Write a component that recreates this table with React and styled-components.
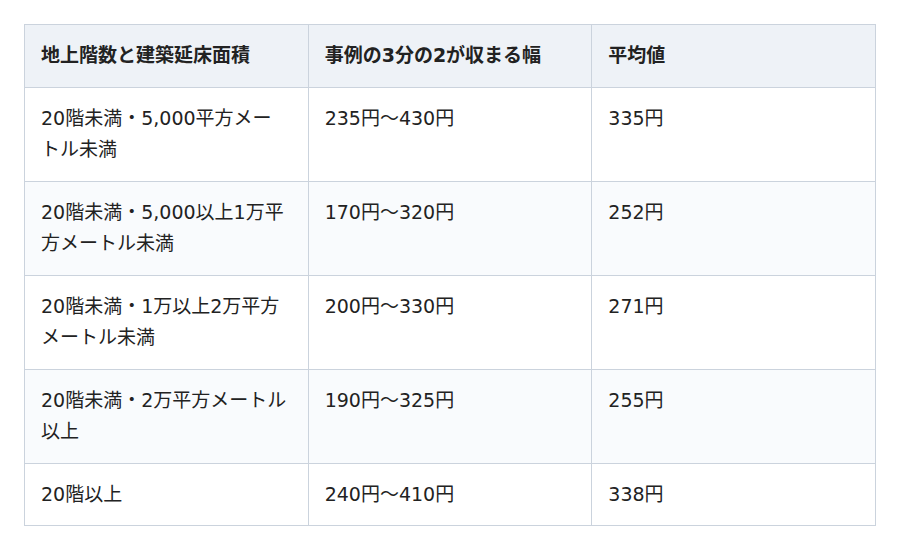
import styled, { createGlobalStyle } from "styled-components";

const GlobalStyle = createGlobalStyle`
  body {
    margin: 0;
    background: #ffffff;
    font-family: "DejaVu Sans", "Noto Sans CJK JP", sans-serif;
    color: #222;
  }
`;

const Page = styled.div`
  width: 900px;
  height: 552px;
  padding: 24px;
  box-sizing: border-box;
`;

const Table = styled.table`
  width: 100%;
  table-layout: fixed;
  border-collapse: collapse;
  border: 1px solid #cbd3dd;
  font-size: 19px;
  line-height: 31.5px;
`;

const HeadCell = styled.th`
  text-align: left;
  font-weight: 700;
  background: #eef2f7;
  padding: 15px 20px 15px 16px;
  border: 1px solid #cbd3dd;
  vertical-align: top;
`;

const Row = styled.tr`
  background: ${(p) => (p.$striped ? "#f9fbfd" : "#ffffff")};
`;

const Cell = styled.td`
  padding: 15px 20px 15px 16px;
  border: 1px solid #cbd3dd;
  vertical-align: top;
  word-break: break-all;
`;

const rows = [
  ["20階未満・5,000平方メートル未満", "235円〜430円", "335円"],
  ["20階未満・5,000以上1万平方メートル未満", "170円〜320円", "252円"],
  ["20階未満・1万以上2万平方メートル未満", "200円〜330円", "271円"],
  ["20階未満・2万平方メートル以上", "190円〜325円", "255円"],
  ["20階以上", "240円〜410円", "338円"],
];

export default function App() {
  return (
    <>
      <GlobalStyle />
      <Page>
        <Table>
          <thead>
            <tr>
              <HeadCell>地上階数と建築延床面積</HeadCell>
              <HeadCell>事例の3分の2が収まる幅</HeadCell>
              <HeadCell>平均値</HeadCell>
            </tr>
          </thead>
          <tbody>
            {rows.map((r, i) => (
              <Row key={i} $striped={i % 2 === 1}>
                <Cell>{r[0]}</Cell>
                <Cell>{r[1]}</Cell>
                <Cell>{r[2]}</Cell>
              </Row>
            ))}
          </tbody>
        </Table>
      </Page>
    </>
  );
}
